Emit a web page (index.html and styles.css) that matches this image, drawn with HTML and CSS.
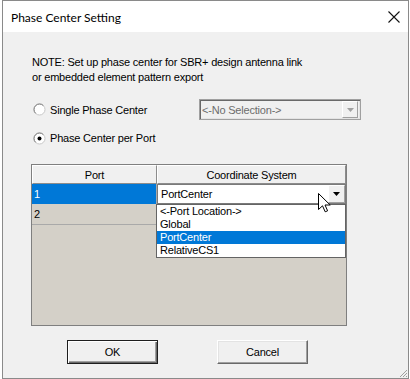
FILE: index.html
```html
<!DOCTYPE html>
<html>
<head>
<meta charset="utf-8">
<link rel="stylesheet" href="styles.css">
</head>
<body>
<div class="window">
  <div class="titlebar">
    <span class="title">Phase Center Setting</span>
    <svg class="close" width="12" height="12" viewBox="0 0 12 12"><path d="M0.5 0.5 L11.5 11.5 M11.5 0.5 L0.5 11.5" stroke="#111" stroke-width="1.1" fill="none"/></svg>
  </div>
  <div class="client">
    <p class="note">NOTE: Set up phase center for SBR+ design antenna link<br>or embedded element pattern export</p>
    <div class="option-row single">
      <label class="radio">
        <svg class="radio-icon" width="13" height="13" viewBox="0 0 13 13"><circle cx="6.5" cy="6.5" r="5.5" fill="#fff" stroke="#c8c8c8"/><path d="M2.6 10.4 A5.5 5.5 0 0 1 10.4 2.6" stroke="#808080" fill="none"/></svg>
        <span>Single Phase Center</span>
      </label>
      <div class="combo disabled">
        <span class="combo-text">&lt;-No Selection-&gt;</span>
        <span class="combo-btn"><svg width="7" height="4" viewBox="0 0 7 4"><path d="M0 0 H7 L3.5 4 Z" fill="#a0a0a0"/></svg></span>
      </div>
    </div>
    <div class="option-row per-port">
      <label class="radio">
        <svg class="radio-icon" width="13" height="13" viewBox="0 0 13 13"><circle cx="6.5" cy="6.5" r="5.5" fill="#fff" stroke="#c8c8c8"/><path d="M2.6 10.4 A5.5 5.5 0 0 1 10.4 2.6" stroke="#808080" fill="none"/><circle cx="6.5" cy="6.5" r="2" fill="#000"/></svg>
        <span>Phase Center per Port</span>
      </label>
    </div>
    <div class="grid">
      <div class="grid-head">
        <div class="hcell col-port">Port</div>
        <div class="hcell col-cs">Coordinate System</div>
      </div>
      <div class="grid-row row-selected">
        <div class="cell col-port">1</div>
        <div class="cell col-cs">
          <div class="cell-combo">
            <span class="combo-text">PortCenter</span>
            <span class="combo-btn active"><svg width="7" height="4" viewBox="0 0 7 4"><path d="M0 0 H7 L3.5 4 Z" fill="#000"/></svg></span>
          </div>
        </div>
      </div>
      <div class="grid-row">
        <div class="cell col-port">2</div>
        <div class="cell col-cs"></div>
      </div>
      <ul class="dropdown">
        <li>&lt;-Port Location-&gt;</li>
        <li>Global</li>
        <li class="hl">PortCenter</li>
        <li>RelativeCS1</li>
      </ul>
      <svg class="cursor" width="13" height="20" viewBox="0 0 13 20"><path d="M0.5 0.5 L0.5 16.5 L4.5 12.8 L7.2 18.8 L9.6 17.8 L7 12 L12.2 12 Z" fill="#fff" stroke="#000" stroke-linejoin="miter"/></svg>
    </div>
    <div class="buttons">
      <button class="btn default">OK</button>
      <button class="btn">Cancel</button>
    </div>
    <svg class="grip" width="9" height="9" viewBox="0 0 9 9"><path d="M8 1 L1 8 M8 4 L4 8 M8 7 L7 8" stroke="#a0a0a0" stroke-width="1" fill="none"/></svg>
  </div>
</div>
</body>
</html>
```

FILE: styles.css
```css
html, body {
  margin: 0;
  padding: 0;
  background: #ffffff;
}

body {
  font-family: "Liberation Sans", Arial, sans-serif;
  font-size: 11px;
  letter-spacing: -0.2px;
  color: #000;
}

.window {
  margin-left: 2px;
  width: 405px;
  height: 377px;
  border: 1px solid #8a8a8a;
  background: #ffffff;
}

.titlebar {
  height: 31px;
  background: #ffffff;
  display: flex;
  align-items: center;
  justify-content: space-between;
  padding: 0 8px 0 8px;
}

.title {
  font-family: Lato, "Noto Sans", sans-serif;
  font-size: 12px;
  letter-spacing: 0;
  color: #000;
  margin-top: 1px;
}

.close {
  display: block;
  margin-top: 1px;
}

.client {
  position: relative;
  height: 346px;
  box-sizing: border-box;
  background: #f0f0f0;
  padding: 23px 0 0 28px;
}

.note {
  margin: 0 0 0 1px;
  line-height: 15px;
}

.option-row {
  display: flex;
  align-items: center;
}

.option-row.single {
  margin-top: 14px;
  height: 21px;
}

.option-row.per-port {
  margin-top: 8px;
  height: 20px;
}

.radio {
  display: flex;
  align-items: center;
  gap: 4px;
  margin-left: 2px;
  width: 166px;
  flex: none;
}

.radio-icon {
  display: block;
}

.combo {
  position: relative;
  box-sizing: border-box;
  width: 162px;
  height: 21px;
  display: flex;
  align-items: center;
  justify-content: space-between;
}

.combo.disabled {
  background: #f0f0f0;
  border: 1px solid #a0a0a0;
  box-shadow: inset 1px 1px 0 #696969, inset -1px -1px 0 #e3e3e3;
  color: #6d6d6d;
  padding: 0 2px 0 2px;
}

.combo-text {
  white-space: nowrap;
}

.combo-btn {
  box-sizing: border-box;
  width: 16px;
  height: 17px;
  display: flex;
  align-items: center;
  justify-content: center;
  background: #f0f0f0;
  border-top: 1px solid #ffffff;
  border-left: 1px solid #ffffff;
  border-right: 1px solid #a0a0a0;
  border-bottom: 1px solid #a0a0a0;
}

.combo-btn svg {
  display: block;
}

.grid {
  position: relative;
  margin-top: 16px;
  width: 316px;
  height: 162px;
  box-sizing: border-box;
  border: 1px solid #7f7f7f;
  background: #d4d0c8;
}

.grid-head {
  display: flex;
  height: 19px;
}

.hcell {
  box-sizing: border-box;
  height: 19px;
  display: flex;
  align-items: center;
  justify-content: center;
  background: #f0f0f0;
  border-top: 1px solid #ffffff;
  border-left: 1px solid #ffffff;
  border-right: 1px solid #8c8c8c;
  border-bottom: 1px solid #8c8c8c;
}

.col-port {
  width: 125px;
  flex: none;
}

.col-cs {
  width: 189px;
  flex: none;
}

.grid-row {
  display: flex;
  height: 20px;
  box-sizing: border-box;
  border-bottom: 1px solid #a9a9a9;
}

.grid-row + .grid-row {
  height: 21px;
}

.cell {
  box-sizing: border-box;
  display: flex;
  align-items: center;
  padding-left: 2px;
  border-right: 1px solid #a9a9a9;
}

.row-selected {
  border-bottom: none;
}

.row-selected .col-port {
  background: #0078d7;
  color: #ffffff;
}

.row-selected .col-cs {
  padding: 0;
  border-right: none;
}

.cell-combo {
  box-sizing: border-box;
  width: 189px;
  height: 20px;
  background: #ffffff;
  border: 1px solid #7a7a7a;
  display: flex;
  align-items: center;
  justify-content: space-between;
  padding-left: 3px;
}

.cell-combo .combo-btn {
  width: 17px;
  height: 18px;
}

.dropdown {
  position: absolute;
  left: 124px;
  top: 39px;
  width: 190px;
  margin: 0;
  padding: 0;
  list-style: none;
  box-sizing: border-box;
  border: 1px solid #646464;
  background: #ffffff;
}

.dropdown li {
  height: 13px;
  line-height: 13px;
  padding-left: 3px;
  white-space: nowrap;
}

.dropdown li.hl {
  background: #0078d7;
  color: #ffffff;
}

.cursor {
  position: absolute;
  left: 286px;
  top: 28px;
  display: block;
}

.buttons {
  display: flex;
  gap: 59px;
  margin: 14px 0 0 36px;
}

.btn {
  box-sizing: border-box;
  width: 91px;
  height: 24px;
  margin: 0;
  padding: 0;
  font-family: "Liberation Sans", Arial, sans-serif;
  font-size: 11px;
  letter-spacing: -0.2px;
  color: #000;
  background: #f0f0f0;
  border-top: 1px solid #ffffff;
  border-left: 1px solid #ffffff;
  border-right: 1px solid #696969;
  border-bottom: 1px solid #696969;
  box-shadow: inset -1px -1px 0 #a0a0a0, inset 1px 1px 0 #e3e3e3;
}

.btn.default {
  border: 1px solid #1e1e1e;
  box-shadow: inset 1px 1px 0 #ffffff, inset -1px -1px 0 #696969, inset -2px -2px 0 #a0a0a0;
}

.grip {
  position: absolute;
  right: 0;
  bottom: 0;
  display: block;
}
```
